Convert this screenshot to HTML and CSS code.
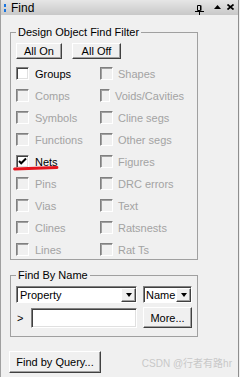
FILE: index.html
```html
<!DOCTYPE html>
<html lang="en">
<head>
  <meta charset="UTF-8" />
  <meta name="viewport" content="width=device-width, initial-scale=1.0"/>
  <title>Find</title>
  <link rel="stylesheet" href="styles.css">
</head>
<body>

<div class="panel">
  <div class="titlebar">
    <span class="grip"><i></i><i></i></span>
    <span class="title">Find</span>
    <span class="tools">
      <svg class="pin" width="9" height="10" viewBox="0 0 9 10">
        <path d="M2.5 0.5h3v5h-3z M6 0.5v5 M0 6.5h9 M4.5 7v3" stroke="#000" fill="none"/>
      </svg>
      <svg class="up" width="7" height="4" viewBox="0 0 7 4">
        <polygon points="0,4 3.5,0 7,4" fill="#000"/>
      </svg>
      <svg class="close" width="7" height="6" viewBox="0 0 7 6">
        <path d="M0.5 0.5L6.5 5.5M6.5 0.5L0.5 5.5" stroke="#000" stroke-width="1.7"/>
      </svg>
    </span>
  </div>

  <div class="content">
    <fieldset class="group filter">
      <legend>Design Object Find Filter</legend>
      <div class="btnrow">
        <button class="btn all-on">All On</button>
        <button class="btn all-off">All Off</button>
      </div>
      <div class="checks">
        <label class="check"><span class="box"></span>Groups</label>
        <label class="check off"><span class="box"></span>Shapes</label>
        <label class="check off"><span class="box"></span>Comps</label>
        <label class="check off"><span class="box"></span>Voids/Cavities</label>
        <label class="check off"><span class="box"></span>Symbols</label>
        <label class="check off"><span class="box"></span>Cline segs</label>
        <label class="check off"><span class="box"></span>Functions</label>
        <label class="check off"><span class="box"></span>Other segs</label>
        <label class="check nets">
          <span class="box">
            <svg width="9" height="9" viewBox="0 0 9 9">
              <polyline points="1,4 3.2,6.3 8,1.5" stroke="#000" stroke-width="2" fill="none"/>
            </svg>
          </span>Nets
          <svg class="mark" width="48" height="6" viewBox="0 0 48 6">
            <path d="M1.5 3 Q22 2.4 44 1.5" stroke="#e5141c" stroke-width="2.8" fill="none" stroke-linecap="round"/>
          </svg>
        </label>
        <label class="check off"><span class="box"></span>Figures</label>
        <label class="check off"><span class="box"></span>Pins</label>
        <label class="check off"><span class="box"></span>DRC errors</label>
        <label class="check off"><span class="box"></span>Vias</label>
        <label class="check off"><span class="box"></span>Text</label>
        <label class="check off"><span class="box"></span>Clines</label>
        <label class="check off"><span class="box"></span>Ratsnests</label>
        <label class="check off"><span class="box"></span>Lines</label>
        <label class="check off"><span class="box"></span>Rat Ts</label>
      </div>
    </fieldset>

    <fieldset class="group byname">
      <legend>Find By Name</legend>
      <div class="namerow">
        <div class="combo prop"><span class="val">Property</span><span class="drop"><i></i></span></div>
        <div class="combo name"><span class="val">Name</span><span class="drop"><i></i></span></div>
      </div>
      <div class="namerow second">
        <span class="prompt">&gt;</span>
        <span class="field"></span>
        <button class="btn more">More...</button>
      </div>
    </fieldset>

    <div class="queryrow">
      <button class="btn query">Find by Query...</button>
      <span class="watermark">CSDN @行者有路hr</span>
    </div>
  </div>
</div>

</body>
</html>
```

FILE: styles.css
```css
body {
  margin: 0;
  background-color: #f0f0f0;
  font-family: "Liberation Sans", Arial, sans-serif;
  font-size: 11px;
  color: #000;
}
.panel {
  width: 239px;
  height: 377px;
  box-sizing: border-box;
  border-left: 1px solid #a0a0a0;
  border-right: 1px solid #8e8e8e;
}
.titlebar {
  height: 15px;
  display: flex;
  align-items: center;
  padding: 0 4px 0 3px;
  background: linear-gradient(#e6e6e6, #c8c8c8);
}
.grip {
  display: flex;
  flex-direction: column;
  gap: 2px;
}
.grip i {
  display: block;
  width: 2px;
  height: 3px;
  background-color: #1a74de;
}
.title {
  margin-left: 5px;
  font-size: 12px;
}
.tools {
  margin-left: auto;
  display: flex;
  align-items: center;
}
.tools svg {
  display: block;
}
.pin {
  margin-top: 4px;
}
.up {
  margin-left: 10px;
  margin-top: -1px;
}
.close {
  margin-left: 6px;
  margin-top: -1px;
}

.content {
  padding-left: 9px;
}
.group {
  margin: 11px 0 0 0;
  width: 188px;
  box-sizing: border-box;
  border: 1px solid #a0a0a0;
  padding: 4px 5px 3px;
  min-width: 0;
}
.group legend {
  padding: 0 2px;
  line-height: 13px;
  font-size: 11px;
}

/* classic 3d controls */
.btn {
  box-sizing: border-box;
  padding: 0;
  font-family: inherit;
  font-size: 11px;
  color: #000;
  background-color: #f0f0f0;
  border: 1px solid;
  border-color: #fff #404040 #404040 #fff;
  box-shadow: inset -1px -1px #a0a0a0;
}
.btnrow {
  display: flex;
  gap: 10px;
}
.all-on {
  width: 46px;
  height: 16px;
}
.all-off {
  width: 49px;
  height: 16px;
}

.checks {
  display: grid;
  grid-template-columns: 84px 84px;
  row-gap: 9px;
  margin-top: 8px;
}
.check {
  position: relative;
  height: 13px;
  display: flex;
  align-items: center;
  white-space: nowrap;
}
.box {
  width: 13px;
  height: 13px;
  box-sizing: border-box;
  display: flex;
  align-items: center;
  justify-content: center;
  margin-right: 6px;
  background-color: #fff;
  border: 1px solid;
  border-color: #808080 #fff #fff #808080;
  box-shadow: inset 1px 1px #404040, inset -1px -1px #e0e0e0;
}
.check.off {
  color: #a3a3a3;
}
.check.off .box {
  background-color: #f0f0f0;
  box-shadow: inset 1px 1px #a0a0a0, inset -1px -1px #f0f0f0;
}
.checks .check:nth-child(even) .box {
  margin-right: 5px;
}
.box svg {
  display: block;
}
.mark {
  position: absolute;
  left: -3px;
  top: 11px;
}

.namerow {
  display: flex;
  align-items: center;
  gap: 6px;
}
.namerow.second {
  margin-top: 4px;
  gap: 0;
}
.combo {
  height: 17px;
  box-sizing: border-box;
  display: flex;
  background-color: #fff;
  border: 1px solid;
  border-color: #808080 #fff #fff #808080;
  box-shadow: inset 1px 1px #404040;
}
.combo.prop {
  width: 121px;
}
.combo.name {
  width: 49px;
}
.combo .val {
  flex: 1;
  padding: 1px 0 0 3px;
  line-height: 14px;
}
.combo.name .val {
  padding-left: 2px;
}
.drop {
  width: 15px;
  margin: 1px 0 0 0;
  box-sizing: border-box;
  display: flex;
  align-items: center;
  justify-content: center;
  background-color: #f0f0f0;
  border: 1px solid;
  border-color: #fff #404040 #404040 #fff;
  box-shadow: inset -1px -1px #a0a0a0;
}
.drop i {
  display: block;
  width: 0;
  height: 0;
  border-top: 4px solid #000;
  border-left: 3.5px solid transparent;
  border-right: 3.5px solid transparent;
}
.prompt {
  width: 15px;
  padding-left: 1px;
  box-sizing: border-box;
}
.field {
  width: 106px;
  height: 20px;
  box-sizing: border-box;
  background-color: #fff;
  border: 1px solid;
  border-color: #808080 #fff #fff #808080;
  box-shadow: inset 1px 1px #404040, inset -1px -1px #e0e0e0;
}
.more {
  width: 49px;
  height: 21px;
  margin-left: 6px;
}
.byname {
  margin-top: 9px;
  padding-bottom: 8px;
}

.queryrow {
  display: flex;
  align-items: center;
  margin-top: 14px;
  margin-left: -1px;
}
.query {
  width: 92px;
  height: 22px;
  font-size: 11px;
}
.watermark {
  margin-left: auto;
  margin-right: 6px;
  font-family: "Liberation Sans", "Noto Sans CJK SC", sans-serif;
  font-size: 10px;
  color: #c8c8c8;
}
```
